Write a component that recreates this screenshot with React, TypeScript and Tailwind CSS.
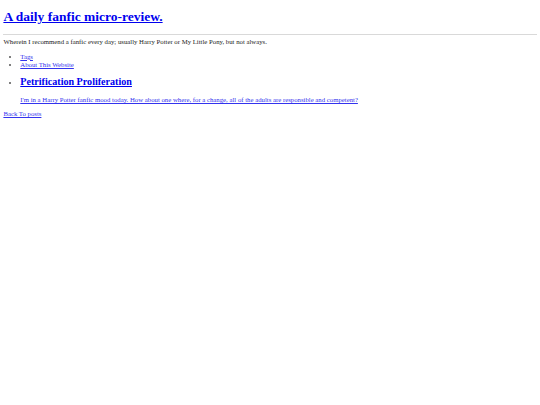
import React from 'react';

const posts = [
  {
    title: 'Petrification Proliferation',
    blurb:
      "I'm in a Harry Potter fanfic mood today. How about one where, for a change, all of the adults are responsible and competent?",
  },
];

export default function App() {
  return (
    <div className="min-h-[405px] bg-white">
      <div className="mx-[3.4px] my-[3.4px] font-['Liberation_Serif',serif] text-[6.75px] leading-[8px] text-[#222]">
        <h1 className="my-[9px] text-[13.5px] leading-[normal] font-bold">
          <a href="#" className="text-[#0000ee] underline">
            A daily fanfic micro-review.
          </a>
        </h1>
        <hr className="my-[3.4px] h-px border-0 bg-[#d9d9d9]" />
        <p className="mt-[2.5px] mb-[6.5px]">
          Wherein I recommend a fanfic every day; usually Harry Potter or My Little Pony, but not always.
        </p>
        <ul className="my-[6.5px] list-disc pl-[16.9px] marker:text-[#555]">
          <li>
            <a href="#" className="text-[#3333ee] underline">Tags</a>
          </li>
          <li>
            <a href="#" className="text-[#3333ee] underline">About This Website</a>
          </li>
        </ul>
        <ul className="mt-[6.5px] mb-[6px] list-disc pl-[16.9px] marker:text-[#555]">
          {posts.map((post) => (
            <li key={post.title}>
              <h2 className="mt-[7.6px] mb-[8px] text-[10.1px] leading-[11.6px] font-bold">
                <a href="#" className="text-[#0000ee] underline">{post.title}</a>
              </h2>
              <p className="mt-[8px] mb-[6px]">
                <a href="#" className="text-[#3333ee] underline">{post.blurb}</a>
              </p>
            </li>
          ))}
        </ul>
        <a href="#" className="text-[#3333ee] underline">Back To posts</a>
      </div>
    </div>
  );
}
